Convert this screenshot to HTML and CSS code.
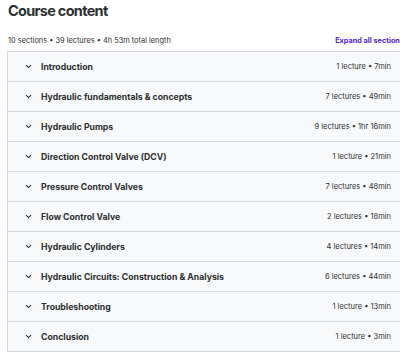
FILE: index.html
```html
<!DOCTYPE html>
<html>
<head>
<meta charset="utf-8">
<link rel="stylesheet" href="styles.css">
</head>
<body>
<div class="page">
  <h2 class="title">Course content</h2>
  <div class="meta">
    <span>10 sections • 39 lectures • 4h 53m total length</span>
    <span class="expand">Expand all sections</span>
  </div>
  <div class="box">
    <div class="row"><span class="chev"><svg width="7" height="5" viewBox="0 0 7 5"><path d="M1 1.2 L3.5 3.6 L6 1.2" fill="none" stroke="#2d2f31" stroke-width="1.1"/></svg></span><span class="name">Introduction</span><span class="info">1 lecture • 7min</span></div>
    <div class="row"><span class="chev"><svg width="7" height="5" viewBox="0 0 7 5"><path d="M1 1.2 L3.5 3.6 L6 1.2" fill="none" stroke="#2d2f31" stroke-width="1.1"/></svg></span><span class="name">Hydraulic fundamentals &amp; concepts</span><span class="info">7 lectures • 49min</span></div>
    <div class="row"><span class="chev"><svg width="7" height="5" viewBox="0 0 7 5"><path d="M1 1.2 L3.5 3.6 L6 1.2" fill="none" stroke="#2d2f31" stroke-width="1.1"/></svg></span><span class="name">Hydraulic Pumps</span><span class="info">9 lectures • 1hr 16min</span></div>
    <div class="row"><span class="chev"><svg width="7" height="5" viewBox="0 0 7 5"><path d="M1 1.2 L3.5 3.6 L6 1.2" fill="none" stroke="#2d2f31" stroke-width="1.1"/></svg></span><span class="name">Direction Control Valve (DCV)</span><span class="info">1 lecture • 21min</span></div>
    <div class="row"><span class="chev"><svg width="7" height="5" viewBox="0 0 7 5"><path d="M1 1.2 L3.5 3.6 L6 1.2" fill="none" stroke="#2d2f31" stroke-width="1.1"/></svg></span><span class="name">Pressure Control Valves</span><span class="info">7 lectures • 48min</span></div>
    <div class="row"><span class="chev"><svg width="7" height="5" viewBox="0 0 7 5"><path d="M1 1.2 L3.5 3.6 L6 1.2" fill="none" stroke="#2d2f31" stroke-width="1.1"/></svg></span><span class="name">Flow Control Valve</span><span class="info">2 lectures • 18min</span></div>
    <div class="row"><span class="chev"><svg width="7" height="5" viewBox="0 0 7 5"><path d="M1 1.2 L3.5 3.6 L6 1.2" fill="none" stroke="#2d2f31" stroke-width="1.1"/></svg></span><span class="name">Hydraulic Cylinders</span><span class="info">4 lectures • 14min</span></div>
    <div class="row"><span class="chev"><svg width="7" height="5" viewBox="0 0 7 5"><path d="M1 1.2 L3.5 3.6 L6 1.2" fill="none" stroke="#2d2f31" stroke-width="1.1"/></svg></span><span class="name">Hydraulic Circuits: Construction &amp; Analysis</span><span class="info">6 lectures • 44min</span></div>
    <div class="row"><span class="chev"><svg width="7" height="5" viewBox="0 0 7 5"><path d="M1 1.2 L3.5 3.6 L6 1.2" fill="none" stroke="#2d2f31" stroke-width="1.1"/></svg></span><span class="name">Troubleshooting</span><span class="info">1 lecture • 13min</span></div>
    <div class="row"><span class="chev"><svg width="7" height="5" viewBox="0 0 7 5"><path d="M1 1.2 L3.5 3.6 L6 1.2" fill="none" stroke="#2d2f31" stroke-width="1.1"/></svg></span><span class="name">Conclusion</span><span class="info">1 lecture • 3min</span></div>
  </div>
</div>
</body>
</html>
```
FILE: styles.css
```css
html, body {
  margin: 0;
  padding: 0;
  background: #ffffff;
}
body {
  font-family: Inter, "Noto Sans", sans-serif;
  color: #2d2f31;
  width: 400px;
  overflow: hidden;
}
.page {
  width: 408px;
  padding-left: 7px;
}
.title {
  margin: 0;
  padding-top: 1px;
  font-size: 14.5px;
  line-height: 19px;
  font-weight: 700;
  letter-spacing: -0.7px;
  height: 28px;
  padding-left: 1px;
}
.meta {
  display: flex;
  justify-content: space-between;
  align-items: center;
  font-size: 7.4px;
  height: 22px;
  padding-left: 1px;
  padding-right: 11px;
  color: #2d2f31;
}
.expand {
  color: #5624d0;
  font-weight: 700;
  font-size: 7.3px;
}
.box {
  border: 1px solid #d1d7dc;
  border-right: none;
  width: 400px;
}
.row {
  display: flex;
  align-items: center;
  height: 29px;
  background: #f7f9fa;
  border-bottom: 1px solid #d1d7dc;
  padding-left: 17px;
  padding-right: 17px;
}
.row:last-child {
  border-bottom: none;
}
.chev {
  display: flex;
  width: 16px;
}
.name {
  font-weight: 700;
  font-size: 8.7px;
  flex: 1;
}
.info {
  font-size: 7.5px;
  color: #2d2f31;
}
```
